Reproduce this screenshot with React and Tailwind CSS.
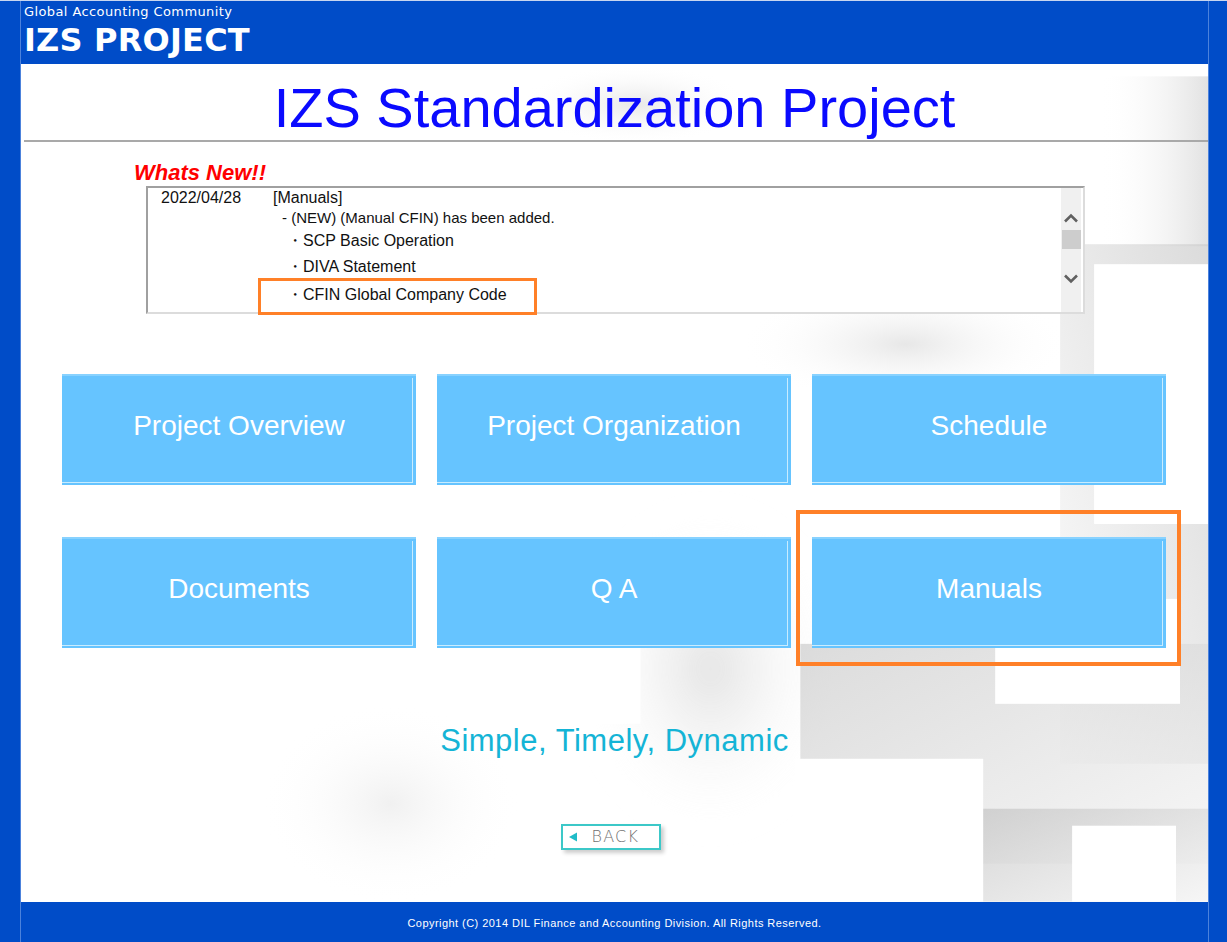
import React from "react";

const buttons = [
  "Project Overview",
  "Project Organization",
  "Schedule",
  "Documents",
  "Q A",
  "Manuals",
];

function Background() {
  return (
    <svg className="absolute inset-0 w-full h-full" width="1188" height="838" viewBox="0 0 1188 838">
      <defs>
        <linearGradient id="g1" x1="0" y1="0" x2="1" y2="0">
          <stop offset="0" stopColor="#ffffff" stopOpacity="0" />
          <stop offset="1" stopColor="#e2e2e2" />
        </linearGradient>
        <linearGradient id="g2" x1="0" y1="0" x2="1" y2="1">
          <stop offset="0" stopColor="#c4c4c4" />
          <stop offset="1" stopColor="#f2f2f2" />
        </linearGradient>
        <linearGradient id="g3" x1="1" y1="0" x2="0" y2="1">
          <stop offset="0" stopColor="#cccccc" />
          <stop offset="1" stopColor="#fafafa" />
        </linearGradient>
        <radialGradient id="r1" cx="0.5" cy="0.5" r="0.5">
          <stop offset="0" stopColor="#cfcfcf" />
          <stop offset="1" stopColor="#ffffff" stopOpacity="0" />
        </radialGradient>
        <filter id="blur" x="-20%" y="-20%" width="140%" height="140%">
          <feGaussianBlur stdDeviation="14" />
        </filter>
      </defs>
      <rect x="1080" y="12" width="108" height="170" fill="url(#g1)" />
      <rect x="500" y="0" width="230" height="80" fill="url(#r1)" opacity="0.5" />
      <rect x="1040" y="180" width="148" height="520" fill="url(#g3)" opacity="0.7" />
      <rect x="1074" y="200" width="114" height="260" fill="#ffffff" />
      <rect x="720" y="220" width="330" height="120" fill="url(#r1)" opacity="0.5" />
      <rect x="560" y="440" width="260" height="330" fill="url(#r1)" opacity="0.6" filter="url(#blur)" />
      <rect x="780" y="580" width="420" height="220" fill="url(#g2)" opacity="0.6" />
      <rect x="960" y="745" width="228" height="93" fill="url(#g2)" opacity="0.7" />
      <rect x="775" y="695" width="188" height="143" fill="#ffffff" />
      <rect x="1052" y="762" width="104" height="76" fill="#ffffff" />
      <rect x="975" y="535" width="185" height="105" fill="#ffffff" />
      <rect x="470" y="520" width="150" height="140" fill="#ffffff" opacity="0.9" />
      <rect x="240" y="640" width="260" height="200" fill="url(#r1)" opacity="0.3" />
    </svg>
  );
}

export default function App() {
  return (
    <div
      className="w-[1227px] h-[942px] bg-[#004cc8] flex flex-col overflow-hidden border-t border-[#c8d6f0]"
      style={{ fontFamily: "'Liberation Sans', Arial, sans-serif" }}
    >
      <div className="ml-[20px] w-[1189px] flex flex-col flex-1 border-l border-r border-[#4c82dc]">
        {/* Header */}
        <header className="h-[63px] bg-[#004cc8] pl-[3px] pt-[3px] text-white">
          <div
            className="text-[13px] leading-[16px] tracking-[0.4px]"
            style={{ fontFamily: "'DejaVu Sans', Verdana, sans-serif" }}
          >
            Global Accounting Community
          </div>
          <div
            className="text-[32px] leading-[40px] font-bold tracking-[0.2px]"
            style={{ fontFamily: "'DejaVu Sans', Verdana, sans-serif" }}
          >
            IZS PROJECT
          </div>
        </header>

        {/* Main */}
        <main className="relative h-[838px] bg-white overflow-hidden">
          <Background />
          <div className="relative flex flex-col">
            <h1 className="h-[76px] flex items-center justify-center text-[56px] leading-none text-[#0a0aff] pt-[11px]">
              IZS Standardization Project
            </h1>
            <div className="ml-[3px] h-[2px] bg-[#a9a9a9]" />

            <div className="ml-[113px] mt-[20px] text-[22px] leading-[22px] font-bold italic text-[#ff0000]">
              Whats New!!
            </div>

            <div className="ml-[125px] mt-[2px] w-[939px] h-[128px] bg-white border-2 border-[#a0a0a0] border-r-[#dcdcdc] border-b-[#dcdcdc] flex">
              <div className="flex-1 text-[16px] text-[#111] pl-[13px] pt-[1px] overflow-hidden">
                <div className="h-[18px] flex items-center">
                  <span className="w-[112px]">2022/04/28</span>
                  <span>[Manuals]</span>
                </div>
                <div className="h-[22px] flex items-center pl-[121px] text-[15px]">- (NEW) (Manual CFIN) has been added.</div>
                <div className="h-[24px] flex items-center pl-[126px]">・SCP Basic Operation</div>
                <div className="h-[28px] flex items-center pl-[126px]">・DIVA Statement</div>
                <div className="h-[28px] flex items-center pl-[126px]">・CFIN Global Company Code</div>
              </div>
              <div className="w-[20px] bg-[#f0f0f0] flex flex-col items-center pt-[24px] mr-[2px]">
                <svg width="16" height="12" viewBox="0 0 16 12">
                  <path d="M2 9.5 L8 3.5 L14 9.5" fill="none" stroke="#606060" strokeWidth="2.6" />
                </svg>
                <div className="w-[19px] h-[19px] bg-[#cdcdcd] mt-[6px]" />
                <div className="mt-[24px]">
                  <svg width="16" height="12" viewBox="0 0 16 12">
                    <path d="M2 2.5 L8 8.5 L14 2.5" fill="none" stroke="#606060" strokeWidth="2.6" />
                  </svg>
                </div>
              </div>
            </div>

            <div className="ml-[41px] mt-[60px] grid grid-cols-[354px_354px_354px] gap-x-[21px] gap-y-[52px]">
              {buttons.map((b) => (
                <div
                  key={b}
                  className="h-[111px] bg-[#66c4ff] border-t-2 border-[#88d2ff] flex items-center justify-center text-white text-[28px] relative"
                >
                  <div className="absolute right-[3px] top-[2px] bottom-[3px] w-px bg-[#c8ecff]" />
                  <div className="absolute left-0 right-[3px] bottom-[2px] h-px bg-[#c8ecff]" />
                  <span className="-mt-[10px]">{b}</span>
                </div>
              ))}
            </div>

            <div className="mt-[72px] text-center text-[31px] leading-[40px] text-[#14b4d6] tracking-[0.5px] pt-[1px]">
              Simple, Timely, Dynamic
            </div>

            <div className="mt-[63px] flex justify-center">
              <div className="-ml-[8px] w-[100px] h-[26px] bg-white border-2 border-[#3cc8c8] shadow-[3px_3px_4px_rgba(0,0,0,0.2)] flex items-center">
                <svg width="11" height="12" viewBox="0 0 11 12" className="ml-[5px]">
                  <path d="M1 6 L9 1.5 L9 10.5 Z" fill="#20bcc8" />
                </svg>
                <span
                  className="ml-[13px] text-[16px] text-[#707070] tracking-[1.2px]"
                  style={{ fontFamily: "'DejaVu Sans', sans-serif", fontWeight: 300 }}
                >
                  BACK
                </span>
              </div>
            </div>
          </div>

          {/* annotation boxes */}
          <div className="absolute left-[237px] top-[214px] w-[279px] h-[37px] border-[3px] border-[#ff8028]" />
          <div className="absolute left-[775px] top-[446px] w-[385px] h-[156px] border-[4px] border-[#ff8028]" />
        </main>

        {/* Footer */}
        <footer className="flex-1 bg-[#004cc8] flex items-center justify-center text-white text-[11px] tracking-[0.45px] pt-[2px]">
          Copyright (C) 2014 DIL Finance and Accounting Division. All Rights Reserved.
        </footer>
      </div>
    </div>
  );
}
